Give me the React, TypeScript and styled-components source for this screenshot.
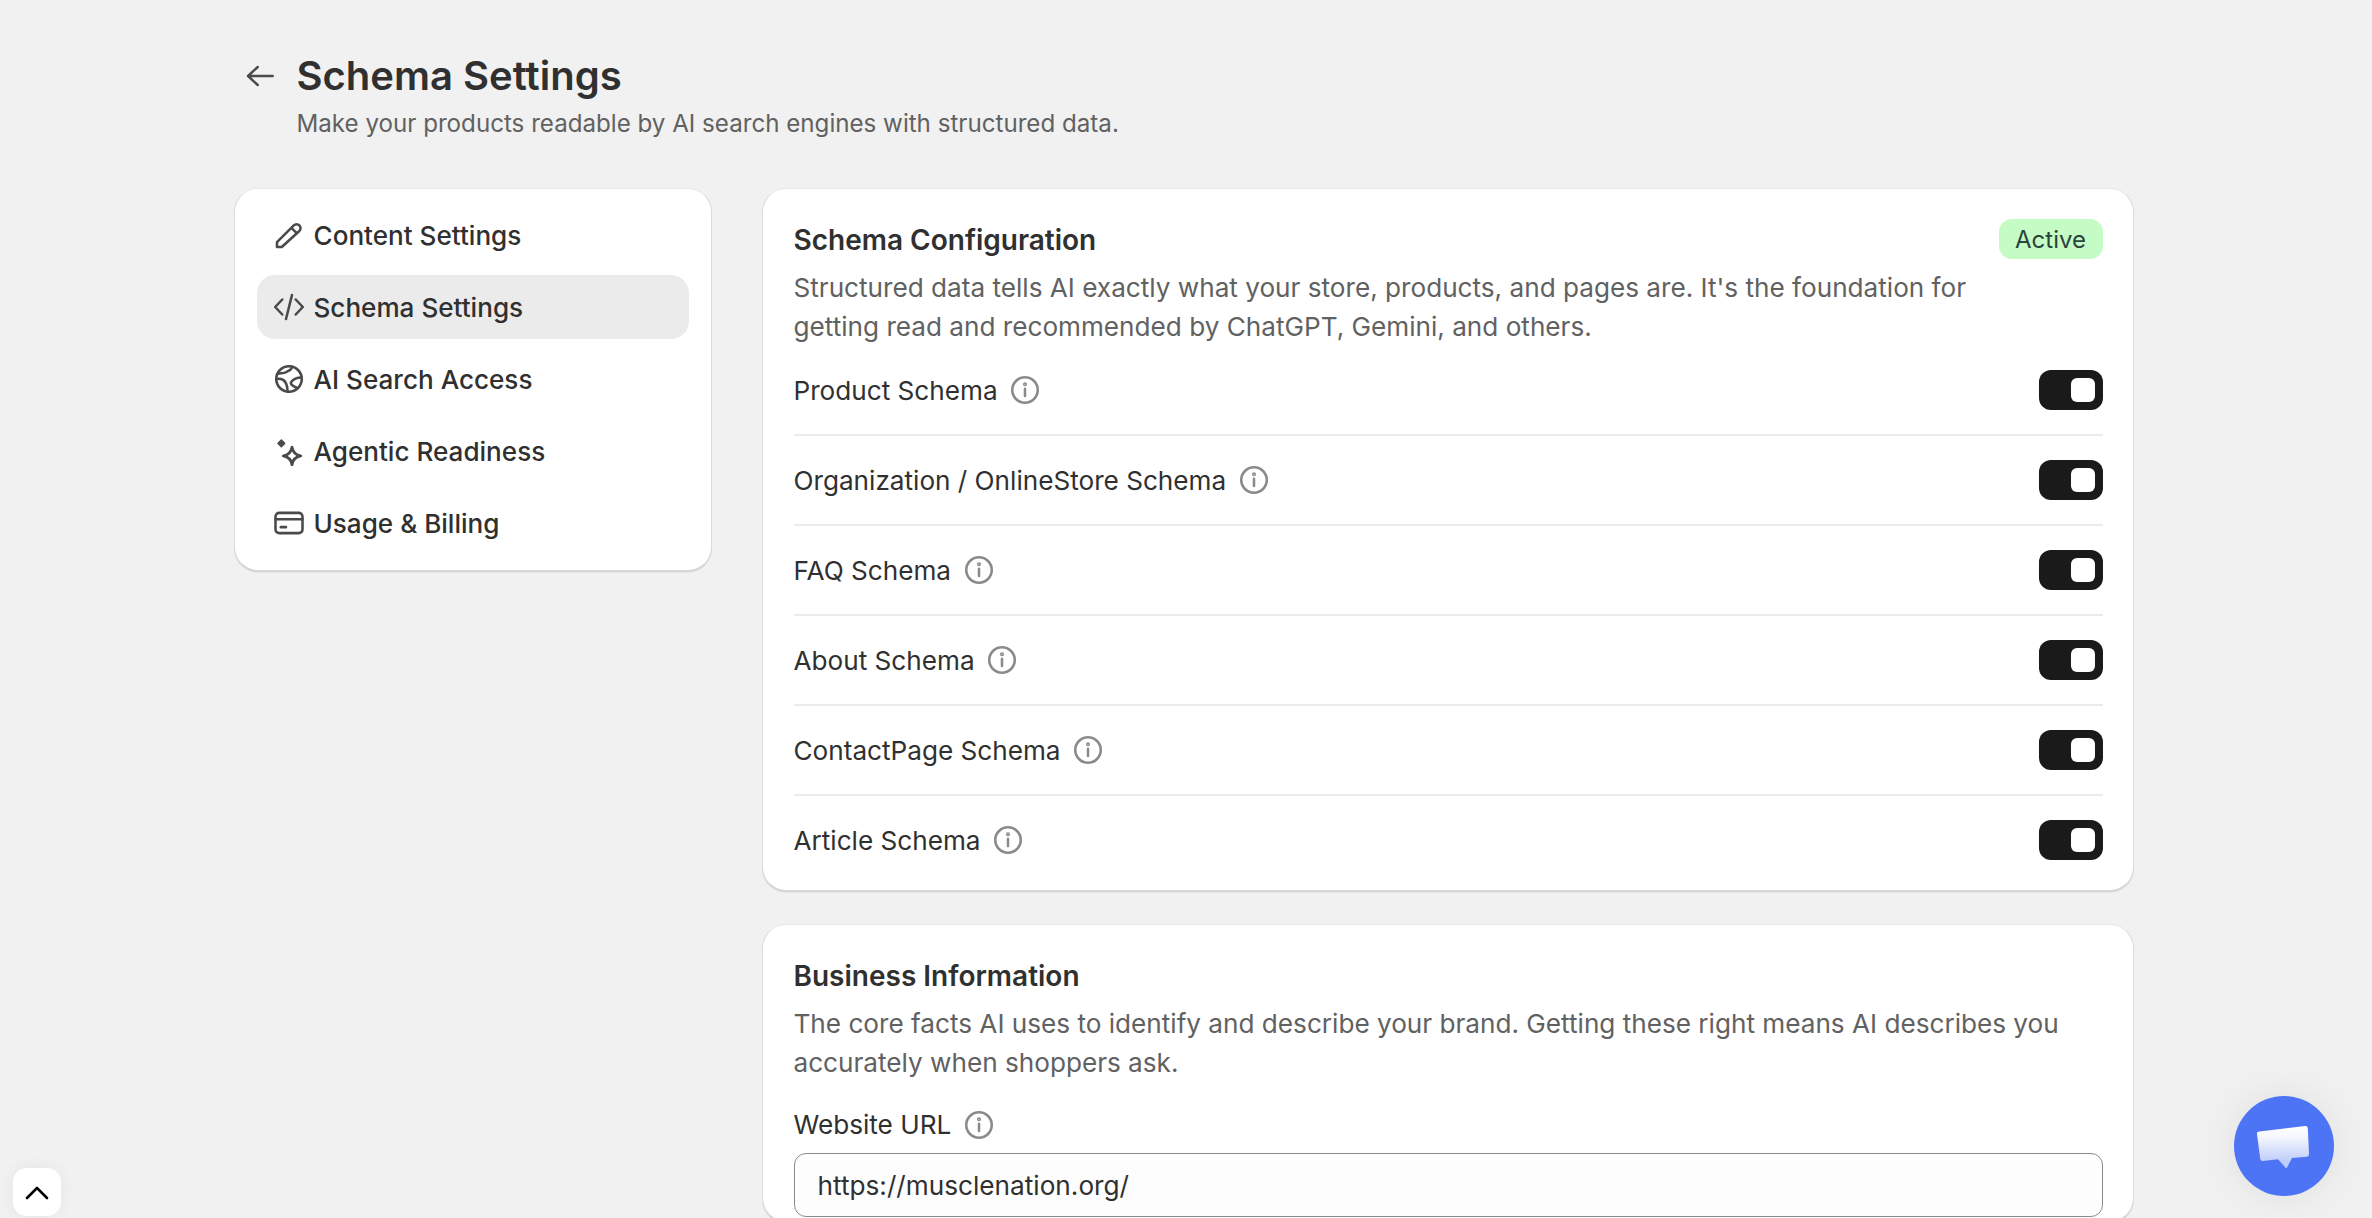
import React from 'react';
import styled, { createGlobalStyle } from 'styled-components';

const GlobalStyle = createGlobalStyle`
  html, body {
    margin: 0;
    height: 100%;
    overflow: hidden;
    background: #f1f1f1;
    font-family: Inter, "Noto Sans", sans-serif;
    color: #303030;
  }
  * { box-sizing: border-box; }
`;

const Page = styled.div`
  width: 1900px;
  margin-left: 234px;
  padding-top: 51px;
`;

const Header = styled.header`
  display: flex;
  align-items: flex-start;
  gap: 18.5px;
  padding-left: 8px;
  margin-bottom: 45px;
`;

const BackButton = styled.button`
  width: 36px;
  height: 50px;
  padding: 0;
  border: 0;
  background: none;
  display: flex;
  align-items: center;
  justify-content: center;
  color: #4a4a4a;
`;

const Title = styled.h1`
  margin: 0;
  font-size: 40px;
  line-height: 50px;
  font-weight: 600;
  color: #303030;
`;

const Subtitle = styled.p`
  margin: 3px 0 0;
  font-size: 24.15px;
  line-height: 39px;
  color: #616161;
`;

const Columns = styled.div`
  display: grid;
  grid-template-columns: 478px 1372px;
  gap: 50px;
  align-items: start;
`;

const Card = styled.section`
  background: #fff;
  border: 1.5px solid;
  border-color: #e8e8e8 #dcdcdc #d4d4d4 #dcdcdc;
  border-radius: 24px;
  box-shadow: 0 1.5px 0 #d8d8d8;
`;

const Nav = styled(Card).attrs({ as: 'nav' })`
  padding: 14px 22.5px 15px 21.5px;
  display: flex;
  flex-direction: column;
  gap: 8px;
`;

const NavItem = styled.a<{ $active?: boolean }>`
  height: 64px;
  display: flex;
  align-items: center;
  gap: 10px;
  padding-left: 17px;
  border-radius: 18px;
  font-size: 26.1px;
  font-weight: 500;
  color: #303030;
  background: ${(p) => (p.$active ? '#ebebeb' : 'transparent')};
`;

const NavIcon = styled.svg`
  width: 30px;
  height: 30px;
  flex: none;
  fill: none;
  stroke: #4a4a4a;
  stroke-width: 1.7;
  stroke-linecap: round;
  stroke-linejoin: round;
`;

const MainColumn = styled.div`
  display: flex;
  flex-direction: column;
  gap: 33px;
`;

const Panel = styled(Card)`
  padding: 30px 30.5px 4px;
`;

const PanelHead = styled.div`
  display: flex;
  align-items: flex-start;
  justify-content: space-between;
  min-height: 40px;
`;

const PanelTitle = styled.h2`
  margin: 0;
  font-size: 28px;
  line-height: 43px;
  font-weight: 600;
  color: #303030;
`;

const Badge = styled.span`
  height: 40px;
  width: 104px;
  display: flex;
  align-items: center;
  justify-content: center;
  border-radius: 13px;
  background: #c5fbc5;
  color: #29453b;
  font-size: 24px;
`;

const Description = styled.p`
  margin: 6px 0 0;
  font-size: 26.15px;
  line-height: 39px;
  color: #616161;
`;

const Row = styled.div`
  height: 90px;
  display: flex;
  align-items: center;
  justify-content: space-between;
  border-bottom: 2px solid #ebebeb;

  &:last-child {
    border-bottom-color: transparent;
  }
`;

const RowLabel = styled.div`
  display: flex;
  align-items: center;
  gap: 12.5px;
  font-size: 26.15px;
  color: #303030;
`;

const InfoIcon = styled.svg`
  width: 30px;
  height: 30px;
  flex: none;
  fill: none;
  stroke: #8a8a8a;
  stroke-width: 1.7;
  stroke-linecap: round;
`;

const Toggle = styled.span`
  width: 64px;
  height: 40px;
  padding: 8px;
  display: flex;
  justify-content: flex-end;
  border-radius: 12px;
  background: #1a1a1a;

  &::after {
    content: '';
    width: 24px;
    height: 24px;
    border-radius: 6px;
    background: #fff;
  }
`;

const Field = styled.div`
  margin-top: 23px;
`;

const FieldLabel = styled(RowLabel)`
  height: 39px;
  margin-bottom: 9px;
`;

const Input = styled.input`
  display: block;
  width: 100%;
  height: 64px;
  padding: 0 23px;
  border: 1.5px solid #8a8a8a;
  border-radius: 12px;
  background: #fdfdfd;
  font: inherit;
  font-size: 26.2px;
  color: #303030;
  outline: none;
`;

const ChatButton = styled.button`
  position: fixed;
  right: 38px;
  bottom: 22px;
  width: 100px;
  height: 100px;
  padding: 0;
  border: 0;
  border-radius: 50%;
  background: #4c74f5;
  box-shadow: 0 0 40px rgba(0, 0, 0, 0.08);
  display: flex;
  align-items: center;
  justify-content: center;
`;

const ScrollTop = styled.button`
  position: fixed;
  left: 13px;
  bottom: 2px;
  width: 48px;
  height: 48px;
  padding: 0;
  border: 0;
  border-radius: 14px;
  background: #fff;
  box-shadow: 0 0 16px rgba(0, 0, 0, 0.06);
  display: flex;
  align-items: center;
  justify-content: center;
`;

const Info = () => (
  <InfoIcon viewBox="0 0 20 20">
    <circle cx="10" cy="10" r="8.5" />
    <path d="M10 9.25v4.75" />
    <circle cx="10" cy="6.1" r="0.5" />
  </InfoIcon>
);

const schemas = [
  'Product Schema',
  'Organization / OnlineStore Schema',
  'FAQ Schema',
  'About Schema',
  'ContactPage Schema',
  'Article Schema',
];

export default function App() {
  return (
    <>
      <GlobalStyle />
      <Page>
        <Header>
          <BackButton aria-label="Back">
            <svg width="30" height="30" viewBox="0 0 20 20" fill="none" stroke="currentColor" strokeWidth="1.6" strokeLinecap="round" strokeLinejoin="round">
              <path d="M18.5 10h-16.500M8.500 4l-6.500 6 6.500 6" />
            </svg>
          </BackButton>
          <div>
            <Title>Schema Settings</Title>
            <Subtitle>Make your products readable by AI search engines with structured data.</Subtitle>
          </div>
        </Header>
        <Columns>
          <Nav>
            <NavItem>
              <NavIcon viewBox="0 0 20 20">
                <path d="M2 18v-3.200L13.200 3.600a2.600 2.600 0 0 1 3.700 3.700L5.200 18zM11.600 5.200l3.700 3.700" />
              </NavIcon>
              Content Settings
            </NavItem>
            <NavItem $active>
              <NavIcon viewBox="0 0 20 20">
                <path d="M5.500 5 .8 10l4.700 5M14.500 5l4.700 5-4.700 5M12 2 8 18" />
              </NavIcon>
              Schema Settings
            </NavItem>
            <NavItem>
              <NavIcon viewBox="0 0 20 20">
                <circle cx="10" cy="10" r="8.500" />
                <path d="M12 1.800c0 2.200-2.500 2.700-4 3.700-1.500 1-3.500.5-5.500 1M2 10c3-.5 4.500.5 5.500 2 1 1.500 1.500 3.500 1.500 6.400M18.300 9c-2.800 0-5.300 1-6.800 3-1 1.500 1.500 3 4 4" />
              </NavIcon>
              AI Search Access
            </NavItem>
            <NavItem>
              <NavIcon viewBox="0 0 20 20">
                <path d="M12 7.500c.6 3.500 2.300 5.200 5.800 5.800-3.500.6-5.200 2.300-5.800 5.800-.6-3.500-2.300-5.200-5.800-5.800 3.500-.6 5.200-2.300 5.800-5.800z" strokeWidth="1.900" />
                <path d="M4.900 2.700 7.100 4.900 4.900 7.100 2.700 4.900z" fill="#4a4a4a" strokeWidth="1" />
              </NavIcon>
              Agentic Readiness
            </NavItem>
            <NavItem>
              <NavIcon viewBox="0 0 20 20">
                <rect x="1" y="3.250" width="18" height="13.500" rx="2.500" />
                <path d="M1 7.500h18M4.500 12.750h3.500" />
              </NavIcon>
              Usage &amp; Billing
            </NavItem>
          </Nav>
          <MainColumn>
            <Panel>
              <PanelHead>
                <PanelTitle>Schema Configuration</PanelTitle>
                <Badge>Active</Badge>
              </PanelHead>
              <Description>
                Structured data tells AI exactly what your store, products, and pages are. It's the foundation for
                <br />
                getting read and recommended by ChatGPT, Gemini, and others.
              </Description>
              <div>
                {schemas.map((name) => (
                  <Row key={name}>
                    <RowLabel>
                      {name}
                      <Info />
                    </RowLabel>
                    <Toggle />
                  </Row>
                ))}
              </div>
            </Panel>
            <Panel>
              <PanelHead>
                <PanelTitle>Business Information</PanelTitle>
              </PanelHead>
              <Description>
                The core facts AI uses to identify and describe your brand. Getting these right means AI describes you
                <br />
                accurately when shoppers ask.
              </Description>
              <Field>
                <FieldLabel>
                  Website URL
                  <Info />
                </FieldLabel>
                <Input readOnly value="https://musclenation.org/" />
              </Field>
            </Panel>
          </MainColumn>
        </Columns>
      </Page>
      <ScrollTop aria-label="Scroll to top">
        <svg width="24" height="24" viewBox="0 0 24 24" fill="none" stroke="#000" strokeWidth="2.6" strokeLinecap="round" strokeLinejoin="round">
          <path d="M2 18 12 8l10 10" />
        </svg>
      </ScrollTop>
      <ChatButton aria-label="Chat">
        <svg width="52" height="44" viewBox="1 -1.500 52 44" overflow="visible">
          <defs>
            <linearGradient id="bubble" x1="0" y1="0" x2="0" y2="1">
              <stop offset="0" stopColor="#ffffff" />
              <stop offset="0.25" stopColor="#f6f8fe" />
              <stop offset="0.85" stopColor="#bfcdf8" />
            </linearGradient>
          </defs>
          <path
            d="M2.500 6 48 .5a2.500 2.500 0 0 1 2.800 2.200L52 28.500a2.500 2.500 0 0 1-2.200 2.700L35 32.500 30 42a1 1 0 0 1-1.600 0L21 33.800 6 35.500a2.500 2.500 0 0 1-2.800-2.200L0 8.800A2.500 2.500 0 0 1 2.500 6z"
            fill="url(#bubble)"
          />
        </svg>
      </ChatButton>
    </>
  );
}
